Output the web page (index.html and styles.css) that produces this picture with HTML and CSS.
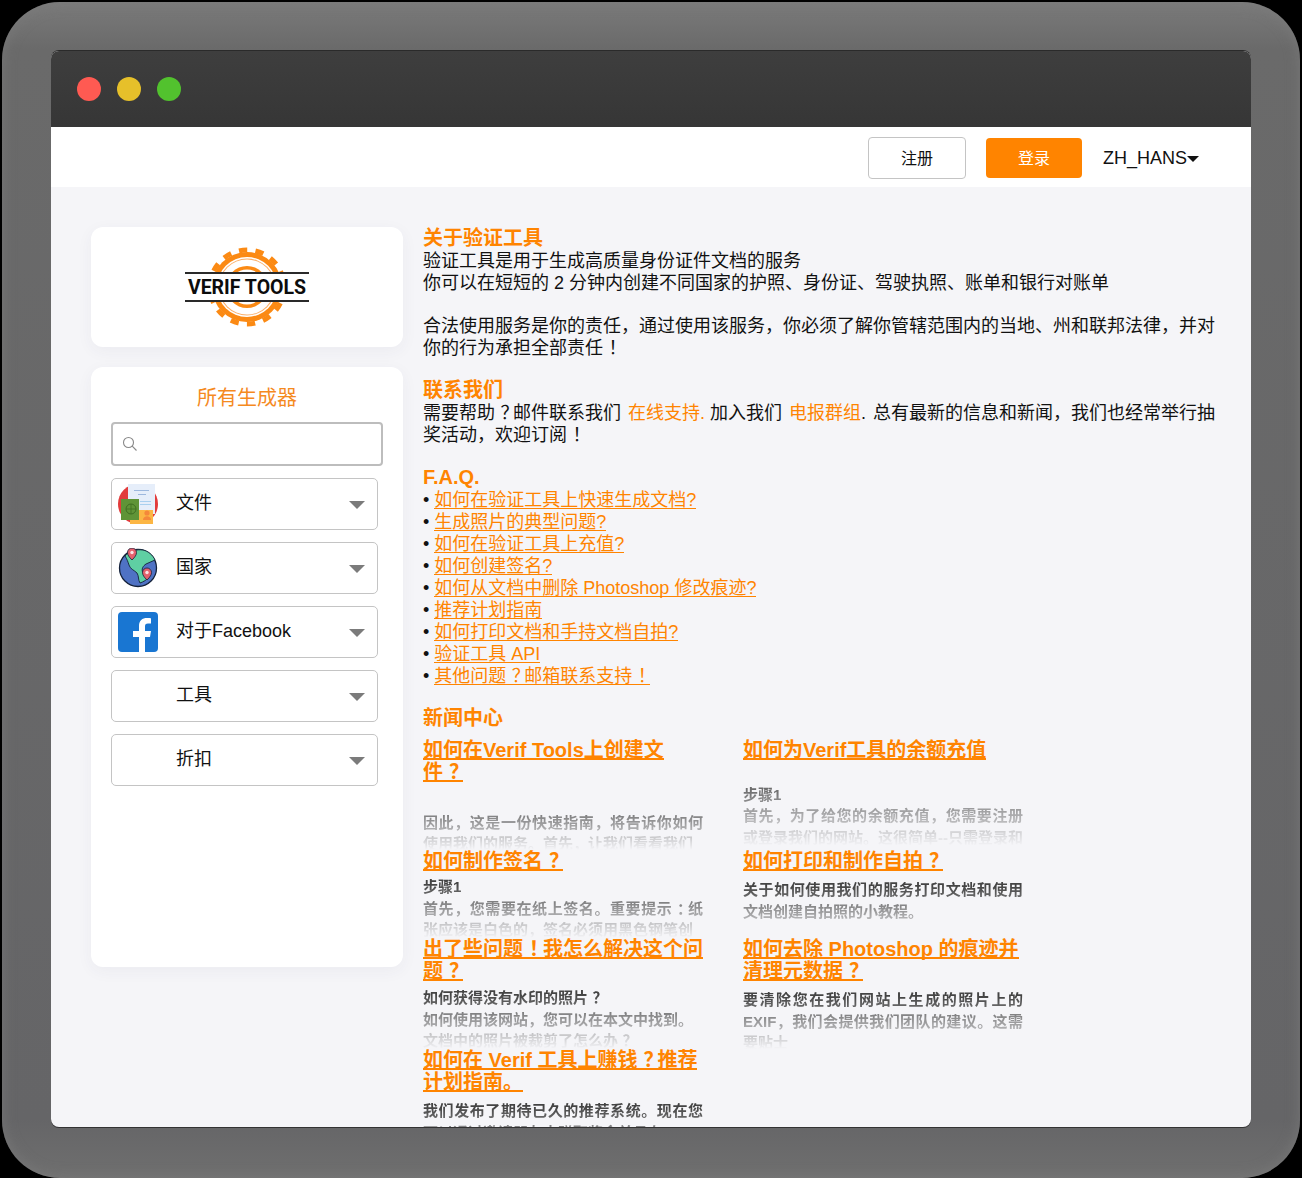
FILE: index.html
```html
<!DOCTYPE html>
<html lang="zh-Hans">
<head>
<meta charset="utf-8">
<title>Verif Tools</title>
<link rel="stylesheet" href="styles.css">
</head>
<body>
<div class="frame">
  <div class="window">
    <div class="titlebar">
      <span class="dot dot-red"></span><span class="dot dot-yellow"></span><span class="dot dot-green"></span>
    </div>
    <header class="topnav">
      <a class="btn btn-outline">注册</a>
      <a class="btn btn-primary">登录</a>
      <span class="lang">ZH_HANS<i class="lang-caret"></i></span>
    </header>
    <div class="page">
      <aside class="sidebar">
        <div class="card logo-card">
          <svg class="logo" width="124" height="82" viewBox="0 0 124 82">
            <circle cx="62" cy="41" r="37" fill="none" stroke="#fb8a14" stroke-width="5" stroke-dasharray="8.3 8.3"/>
            <circle cx="62" cy="41" r="35" fill="#fb8a14"/>
            <circle cx="62" cy="41" r="30" fill="#fff"/>
            <circle cx="62" cy="41" r="28.500" fill="#fbb06a"/>
            <circle cx="62" cy="41" r="27.500" fill="#fff"/>
            <circle cx="62" cy="41" r="21" fill="#fb8a14"/>
            <circle cx="62" cy="41" r="17.500" fill="#fff"/>
            <rect x="0" y="26" width="124" height="30" fill="#fff"/>
            <rect x="0" y="26" width="124" height="2" fill="#2a2a2a"/>
            <rect x="0" y="54" width="124" height="2" fill="#2a2a2a"/>
            <text x="62" y="48" class="logo-text" text-anchor="middle">VERIF TOOLS</text>
          </svg>
        </div>
        <div class="card gen-card">
          <h2 class="gen-title">所有生成器</h2>
          <div class="search">
            <svg width="16" height="16" viewBox="0 0 16 16"><circle cx="6.500" cy="6.500" r="5" fill="none" stroke="#888" stroke-width="1.100"/><path d="M10.200 10.200 14.500 14.500" stroke="#888" stroke-width="1.100" fill="none"/></svg>
          </div>
          <div class="acc">
            <svg class="acc-icon" width="40" height="40" viewBox="0 0 40 40">
              <circle cx="20" cy="20" r="20" fill="#e23b3b"/>
              <rect x="10" y="0" width="27" height="30" fill="#e6eefa"/>
              <rect x="16" y="6" width="15" height="1" fill="#9db8de"/>
              <rect x="20" y="10" width="8" height="1" fill="#9db8de"/>
              <rect x="22" y="17" width="11" height="1" fill="#a9d0ef"/>
              <rect x="22" y="20" width="11" height="1" fill="#a9d0ef"/>
              <rect x="12" y="26" width="23" height="14" fill="#fcb644"/>
              <circle cx="29" cy="29" r="2.600" fill="#f5883a"/>
              <path d="M25 36c0-5 8-5 8 0z" fill="#f5883a"/>
              <rect x="3" y="15" width="18" height="21" fill="#5f9437"/>
              <circle cx="13" cy="25" r="5" fill="none" stroke="#3f6e22"/>
              <path d="M8 25h10M13 20v10" stroke="#3f6e22" stroke-width=".8"/>
            </svg>
            <span class="acc-label">文件</span><i class="acc-caret"></i>
          </div>
          <div class="acc">
            <svg class="acc-icon" width="40" height="40" viewBox="0 0 40 40">
              <circle cx="20" cy="20" r="18.500" fill="#4f72c4" stroke="#14213a" stroke-width="1.300"/>
              <path d="M7 8c4-5 12-7 18-6 5 1 10 5 12 10l-9 4c-3 2-5 5-3 9l7 3c-3 4-7 6-10 7-2-3-1-7-3-10-3-3-7-4-8-8-1-3-2-6-4-9z" fill="#5fcfa3" stroke="#14213a" stroke-width=".9"/>
              <path d="M14 12c-3-3-4.500-5-4.500-7.500a4.500 4.500 0 0 1 9 0c0 2.500-1.500 4.500-4.500 7.500z" fill="#e4606d" stroke="#14213a" stroke-width=".8"/>
              <circle cx="14" cy="4.500" r="1.700" fill="#fbe3e6"/>
              <path d="M29 32c-3-3-4.500-5-4.500-7.500a4.500 4.500 0 0 1 9 0c0 2.500-1.500 4.500-4.500 7.500z" fill="#e4606d" stroke="#14213a" stroke-width=".8"/>
              <circle cx="29" cy="24.500" r="1.700" fill="#fbe3e6"/>
            </svg>
            <span class="acc-label">国家</span><i class="acc-caret"></i>
          </div>
          <div class="acc">
            <svg class="acc-icon" width="40" height="40" viewBox="0 0 40 40">
              <rect width="40" height="40" rx="4" fill="#1976d2"/>
              <path d="M21 40V25h-6v-6h6v-5c0-5.500 3.300-8 8-8 2 0 3.500.1 4 .2v5.300h-3c-2.400 0-3 1.200-3 3V19h6l-1 6h-5v15z" fill="#fff"/>
            </svg>
            <span class="acc-label">对于Facebook</span><i class="acc-caret"></i>
          </div>
          <div class="acc">
            <span class="acc-icon"></span>
            <span class="acc-label">工具</span><i class="acc-caret"></i>
          </div>
          <div class="acc">
            <span class="acc-icon"></span>
            <span class="acc-label">折扣</span><i class="acc-caret"></i>
          </div>
        </div>
      </aside>
      <main class="content">
        <section class="block block-about">
          <h3 class="head">关于验证工具</h3>
          <p>验证工具是用于生成高质量身份证件文档的服务<br>你可以在短短的 2 分钟内创建不同国家的护照、身份证、驾驶执照、账单和银行对账单</p>
          <p class="para-gap">合法使用服务是你的责任，通过使用该服务，你必须了解你管辖范围内的当地、州和联邦法律，并对你的行为承担全部责任<span class="pc">！</span></p>
        </section>
        <section class="block block-contact">
          <h3 class="head">联系我们</h3>
          <p>需要帮助<span class="pc">？</span>邮件联系我们 <a class="plain">在线支持.</a> 加入我们 <a class="plain">电报群组</a><span class="gap">.</span> 总有最新的信息和新闻，我们也经常举行抽奖活动，欢迎订阅<span class="pc">！</span></p>
        </section>
        <section class="block block-faq">
          <h3 class="head">F.A.Q.</h3>
          <ul class="faq">
            <li><a>如何在验证工具上快速生成文档?</a></li>
            <li><a>生成照片的典型问题?</a></li>
            <li><a>如何在验证工具上充值?</a></li>
            <li><a>如何创建签名?</a></li>
            <li><a>如何从文档中删除 Photoshop 修改痕迹?</a></li>
            <li><a>推荐计划指南</a></li>
            <li><a>如何打印文档和手持文档自拍?</a></li>
            <li><a>验证工具 API</a></li>
            <li><a>其他问题<span class="pc">？</span>邮箱联系支持<span class="pc">！</span></a></li>
          </ul>
        </section>
        <section class="block">
          <h3 class="head">新闻中心</h3>
          <div class="news">
            <article class="item">
              <div class="item-head"><a class="item-title">如何在Verif Tools上创建文件<span class="pc">？</span></a></div>
              <div class="ex ex-a"><br>因此，这是一份快速指南，将告诉你如何使用我们的服务。首先，让我们看看我们</div>
            </article>
            <article class="item">
              <div class="item-head"><a class="item-title">如何为Verif工具的余额充值</a></div>
              <div class="ex ex-b"><br>步骤1<br>首先，为了给您的余额充值，您需要注册或登录我们的网站。这很简单--只需登录和</div>
            </article>
            <article class="item">
              <div class="item-head"><a class="item-title">如何制作签名<span class="pc">？</span></a></div>
              <div class="ex ex-c">步骤1<br>首先，您需要在纸上签名。重要提示<span class="pc">：</span>纸张应该是白色的，签名必须用黑色钢笔创</div>
            </article>
            <article class="item">
              <div class="item-head"><a class="item-title">如何打印和制作自拍<span class="pc">？</span></a></div>
              <div class="ex ex-d">关于如何使用我们的服务打印文档和使用文档创建自拍照的小教程。</div>
            </article>
            <article class="item">
              <div class="item-head"><a class="item-title">出了些问题<span class="pc">！</span>我怎么解决这个问题<span class="pc">？</span></a></div>
              <div class="ex ex-e">如何获得没有水印的照片<span class="pc">？</span><br>如何使用该网站，您可以在本文中找到。<br>文档中的照片被裁剪了怎么办<span class="pc">？</span></div>
            </article>
            <article class="item">
              <div class="item-head"><a class="item-title">如何去除 Photoshop 的痕迹并清理元数据<span class="pc">？</span></a></div>
              <div class="ex ex-d">要清除您在我们网站上生成的照片上的 EXIF，我们会提供我们团队的建议。这需要贴士</div>
            </article>
            <article class="item">
              <div class="item-head"><a class="item-title">如何在 Verif 工具上赚钱<span class="pc">？</span>推荐计划指南。</a></div>
              <div class="ex ex-d">我们发布了期待已久的推荐系统。现在您可以通过邀请朋友来赚取奖金并且在</div>
            </article>
          </div>
        </section>
      </main>
    </div>
  </div>
</div>
</body>
</html>
```
FILE: styles.css
```css
* { box-sizing: border-box; }
html, body { margin: 0; height: 100%; }
body {
  background: #000;
  font-family: "Liberation Sans", "Noto Sans CJK SC", sans-serif;
  color: #111;
  overflow: hidden;
}
.frame {
  width: 1298px;
  height: 1176px;
  margin: 2px 2px 0;
  padding: 49px;
  border-radius: 58px;
  background: linear-gradient(#7a7a7a, #6a6a6a 4%, #656567 95%, #6f6f6f);
  box-shadow: inset 0 0 14px rgba(125,125,125,.7);
}
.window {
  width: 1200px;
  height: 1076px;
  border-radius: 8px;
  overflow: hidden;
  background: #f5f5f8;
  display: flex;
  flex-direction: column;
  box-shadow: 0 -1px 0 #2a2a2a, 0 1px 0 #333;
}
.titlebar {
  height: 76px;
  flex: none;
  padding-left: 26px;
  display: flex;
  align-items: center;
  gap: 16px;
  background: linear-gradient(#3e3e3e, #363636);
}
.dot { width: 24px; height: 24px; border-radius: 50%; }
.dot-red { background: #ff5a52; }
.dot-yellow { background: #e6c02a; }
.dot-green { background: #52c22e; }
.topnav {
  height: 60px;
  flex: none;
  background: #fff;
  display: flex;
  align-items: center;
  justify-content: flex-end;
  padding: 2px 52px 0 0;
  font-size: 16px;
}
.btn {
  display: flex;
  align-items: center;
  justify-content: center;
  border-radius: 4px;
  padding-bottom: 3px;
}
.btn-outline {
  width: 98px;
  height: 42px;
  border: 1px solid #c4c4c4;
  background: #fff;
  margin-right: 20px;
  color: #111;
}
.btn-primary {
  width: 96px;
  height: 40px;
  background: #ff8400;
  color: #fff;
  margin-right: 21px;
}
.lang { font-size: 18px; display: flex; align-items: center; }
.lang-caret {
  width: 0; height: 0;
  border: 6px solid transparent;
  border-top-color: #111;
  border-bottom-width: 0;
  margin-top: 1px;
}
.page {
  flex: 1;
  min-height: 0;
  display: flex;
  gap: 20px;
  padding: 40px 32px 0 40px;
  overflow: hidden;
}
.sidebar {
  width: 312px;
  flex: none;
  display: flex;
  flex-direction: column;
  gap: 20px;
}
.card {
  background: #fff;
  border-radius: 12px;
  box-shadow: 0 4px 16px rgba(60,60,90,.05);
}
.logo-card {
  height: 120px;
  display: flex;
  align-items: center;
  justify-content: center;
}
.logo-text {
  font-family: Roboto, "Liberation Sans", sans-serif;
  font-weight: 700;
  font-size: 19.500px;
  fill: #0c0c0c;
}
.gen-card {
  height: 600px;
  padding: 19px 20px 0;
}
.gen-title {
  margin: 0 0 11px;
  font-size: 20px;
  line-height: 25px;
  font-weight: 400;
  color: #f58a1f;
  text-align: center;
}
.search {
  width: 272px;
  height: 44px;
  border: 2px solid #bdbdbd;
  border-radius: 4px;
  display: flex;
  align-items: center;
  padding-left: 9px;
  margin-bottom: 12px;
}
.acc {
  width: 267px;
  height: 52px;
  border: 1px solid #c4c4c4;
  border-radius: 5px;
  display: flex;
  align-items: center;
  padding-left: 6px;
  margin-bottom: 12px;
  background: #fff;
}
.acc-icon { width: 40px; height: 40px; flex: none; }
.acc-label { margin: 0 0 7px 18px; font-size: 18px; flex: 1; }
.acc-caret {
  width: 0; height: 0;
  border-style: solid;
  border-width: 8px 8px 0;
  border-color: #7b7b7b transparent transparent;
  margin: 2px 12px 0 0;
}
.content {
  flex: 1;
  min-width: 0;
  font-size: 18px;
  line-height: 22px;
  color: #111;
}
.content p { margin: 0; }
.content .para-gap { margin-top: 21px; }
.pc { padding-left: .3em; margin-right: -.3em; }
.block-about { margin-bottom: 20px; }
.block-contact { margin-bottom: 20px; }
.block-faq { margin-bottom: 20px; }
.head {
  margin: 0 0 1px;
  font-size: 20px;
  line-height: 22px;
  font-weight: 700;
  color: #ff8400;
}
.plain, .faq a { color: #ff8400; }
.plain { margin-left: 2px; }
.gap { margin-right: 2px; }
.faq { list-style: none; margin: 0; padding: 0; }
.faq li::before { content: "• "; }
.faq a {
  background: linear-gradient(#ff8400, #ff8400) 0 calc(100% - 1px) / 100% 1px no-repeat;
  -webkit-box-decoration-break: clone;
  box-decoration-break: clone;
}
.news {
  display: grid;
  grid-template-columns: 280px 280px;
  grid-template-rows: 111px 88px 111px 111px;
  column-gap: 40px;
  margin-top: 10px;
}
.item {
  display: flex;
  flex-direction: column;
  min-height: 0;
  overflow: hidden;
}
.item-head {
  flex: none;
  font-size: 20px;
  line-height: 22px;
  font-weight: 700;
}
.item-title {
  color: #ff8400;
  background: linear-gradient(#ff8400, #ff8400) 0 calc(100% - 1px) / 100% 2px no-repeat;
  -webkit-box-decoration-break: clone;
  box-decoration-break: clone;
}
.ex {
  flex: 1;
  min-height: 0;
  overflow: hidden;
  font-size: 15px;
  line-height: 21.500px;
  font-weight: 700;
  color: #444;
  text-align: justify;
  -webkit-mask-image: linear-gradient(#000 12%, transparent 100%);
  mask-image: linear-gradient(#000 12%, transparent 100%);
}
.ex-a { margin-top: 7px; }
.ex-b { margin-top: 1px; margin-bottom: 4px; }
.ex-c { margin-top: 4px; }
.ex-d { margin-top: 7px; }
.ex-e { margin-top: 5px; }
```
